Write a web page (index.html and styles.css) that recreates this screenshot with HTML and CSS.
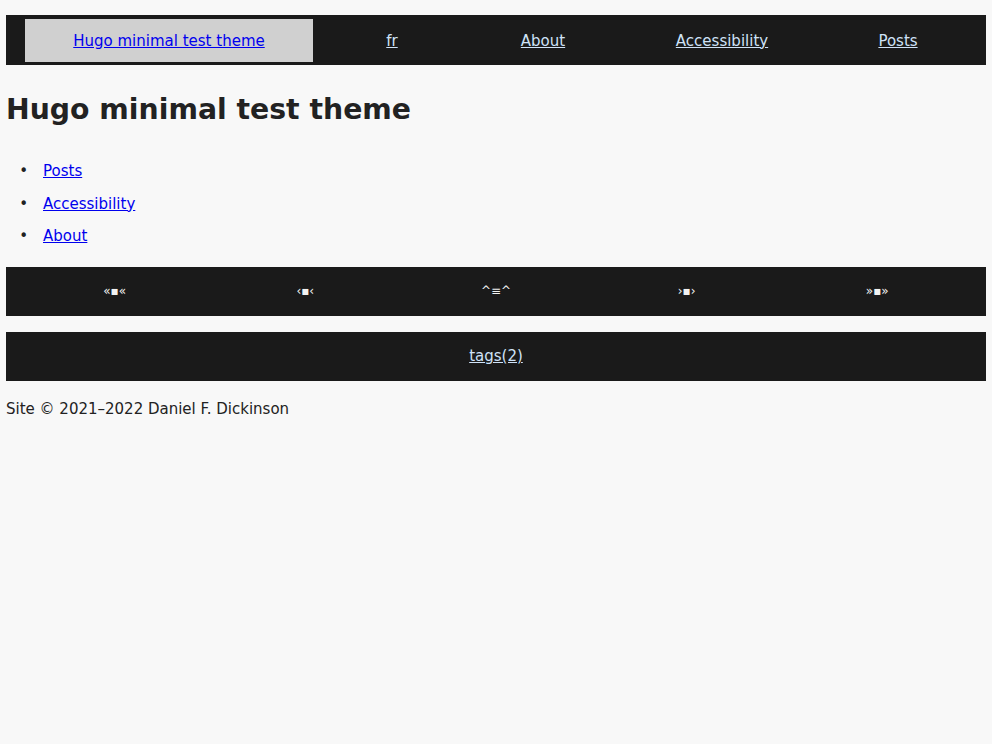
FILE: index.html
```html
<!DOCTYPE html>
<html lang="en">
<head>
<meta charset="utf-8">
<title>Hugo minimal test theme</title>
<link rel="stylesheet" href="styles.css">
</head>
<body>
<header class="site-header">
  <nav class="top-nav">
    <ul class="top-nav-list">
      <li class="top-item current"><a href="#">Hugo minimal test theme</a></li>
      <li class="top-item"><a href="#">fr</a></li>
      <li class="top-item"><a href="#">About</a></li>
      <li class="top-item"><a href="#">Accessibility</a></li>
      <li class="top-item"><a href="#">Posts</a></li>
    </ul>
  </nav>
</header>
<main class="content">
  <h1 class="page-title">Hugo minimal test theme</h1>
  <ul class="section-list">
    <li><a href="#">Posts</a></li>
    <li><a href="#">Accessibility</a></li>
    <li><a href="#">About</a></li>
  </ul>
</main>
<nav class="pager">
  <span class="pager-item">«▪«</span>
  <span class="pager-item">‹▪‹</span>
  <span class="pager-item">^≡^</span>
  <span class="pager-item">›▪›</span>
  <span class="pager-item">»▪»</span>
</nav>
<nav class="taxonomies">
  <a href="#">tags(2)</a>
</nav>
<footer class="site-footer">Site © 2021–2022 Daniel F. Dickinson</footer>
</body>
</html>
```

FILE: styles.css
```css
html {
  background: #f8f8f8;
}
body {
  margin: 0;
  padding: 15px 6px 0;
  font-family: "DejaVu Sans", Verdana, sans-serif;
  font-size: 15px;
  color: #222;
}
.site-header {
  background: #1a1a1a;
}
.top-nav-list {
  list-style: none;
  margin: 0;
  padding: 4px 0 3px 19px;
  display: grid;
  grid-template-columns: 288px 158px 144px 214px 138px;
  height: 43px;
}
.top-item {
  display: flex;
  align-items: center;
  justify-content: center;
}
.top-item a {
  color: #cfe2f7;
}
.top-item.current {
  background: #d0d0d0;
}
.top-item.current a {
  color: #0000ee;
}
.page-title {
  font-size: 28.3px;
  font-weight: bold;
  margin: 25px 0 25px;
  line-height: 40px;
}
.section-list {
  margin: 0;
  padding-left: 37px;
}
.section-list li {
  line-height: 32.5px;
}
.section-list li::marker {
  content: "•\2003";
}
.section-list a {
  color: #0000ee;
}
.pager {
  margin-top: 14px;
  background: #1a1a1a;
  height: 49px;
  display: flex;
  justify-content: space-evenly;
  align-items: center;
  color: #f2f2f2;
  font-size: 12px;
}
.pager-item {
  width: 164px;
  text-align: center;
}
.taxonomies {
  margin-top: 16px;
  background: #1a1a1a;
  height: 49px;
  display: flex;
  justify-content: center;
  align-items: center;
}
.taxonomies a {
  color: #cfe2f7;
}
.site-footer {
  margin-top: 18px;
  line-height: 20px;
}
```
